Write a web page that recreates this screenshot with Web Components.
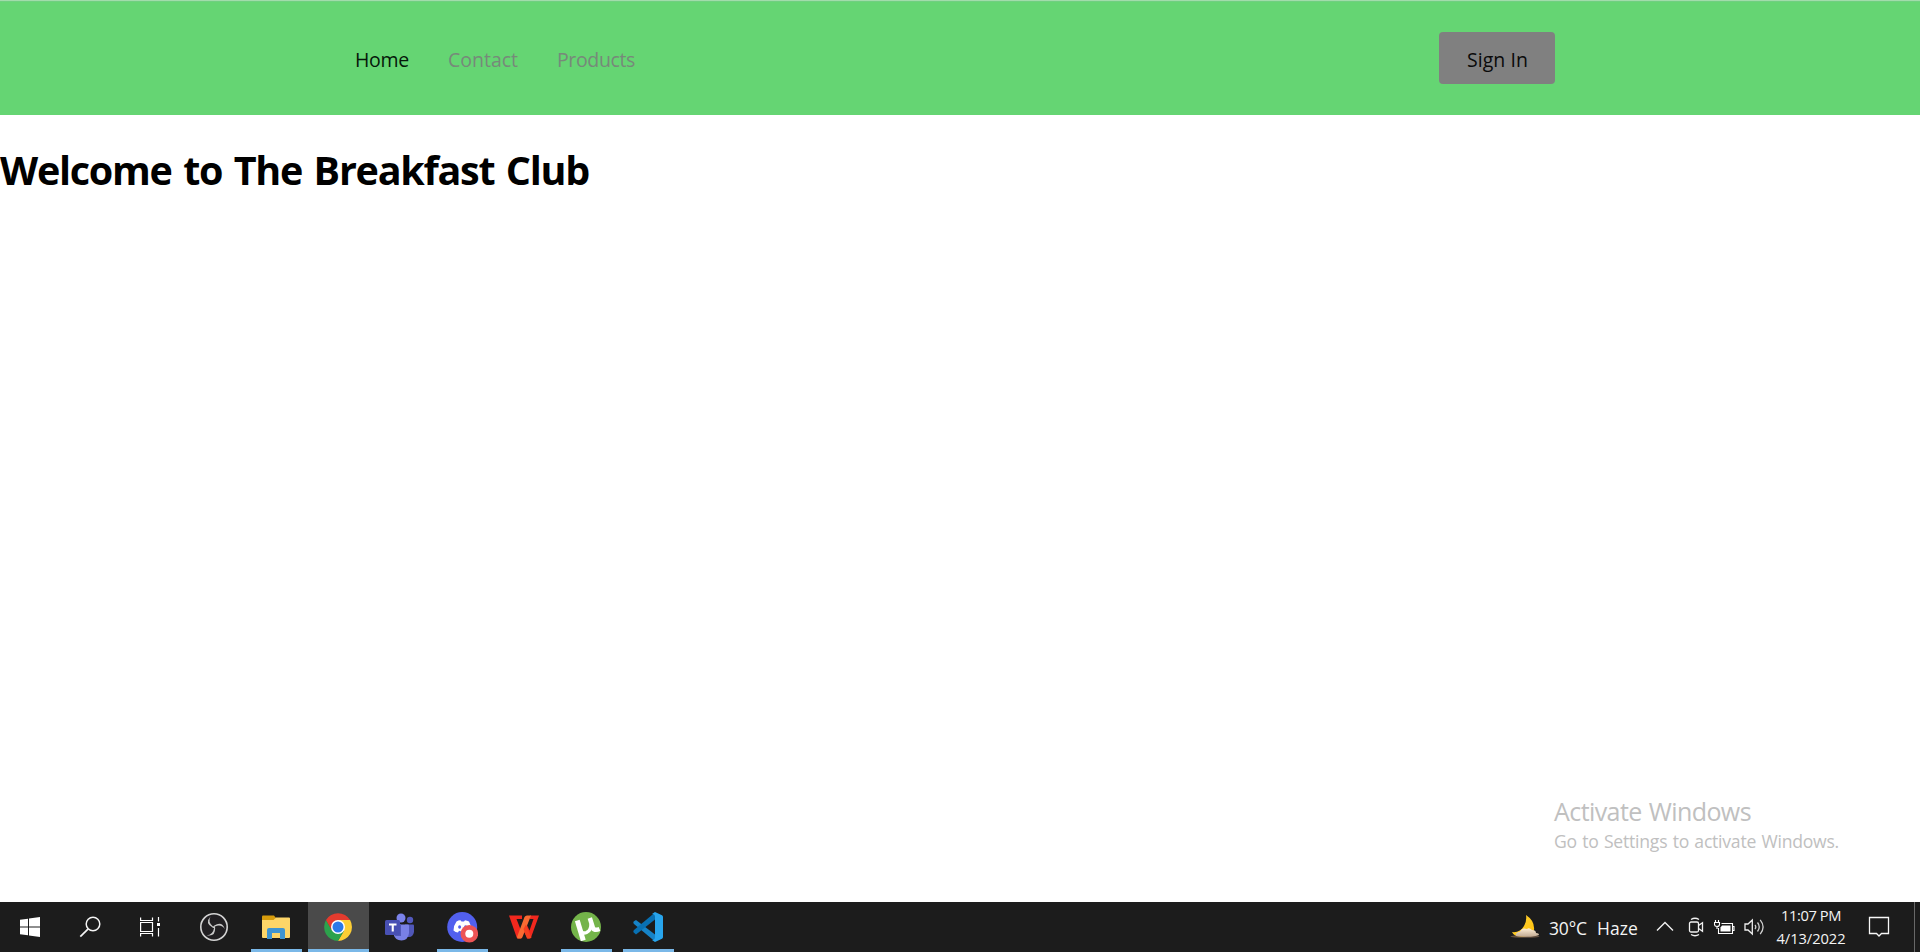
<!DOCTYPE html>
<html lang="en">
<head>
<meta charset="utf-8">
<title>The Breakfast Club</title>
<style>
html, body { margin: 0; height: 100%; overflow: hidden; background: #fff; font-family: "Open Sans", "Noto Sans", sans-serif; }
</style>
</head>
<body>
<desk-screen></desk-screen>
<script>
const define = (name, html, ready) => customElements.define(name, class extends HTMLElement {
  constructor() {
    super();
    this.attachShadow({ mode: "open" }).innerHTML = html;
  }
  connectedCallback() { if (ready) ready.call(this, this.shadowRoot); }
});

/* A one-line label whose letters are spaced to fill the width given */
define("fit-label", `<style>:host{display:block;white-space:pre;flex:none}span{display:inline-block}</style><span></span>`, function (root) {
  const span = root.querySelector("span");
  const text = this.getAttribute("text");
  const width = Number(this.getAttribute("width"));
  span.textContent = text;
  this.style.width = width + "px";
  const natural = span.getBoundingClientRect().width;
  span.style.letterSpacing = ((width - natural) / text.length) + "px";
});

define("nav-link", `<style>
:host{display:block;color:#77897a}
:host([active]){color:#06180a}
</style><slot></slot>`);

define("sign-button", `<style>
:host{display:flex;width:116px;height:52px;box-sizing:border-box;border-radius:4px;background:#808080;color:#0a0a0a;justify-content:center;padding:13px 0 0 1px}
</style><slot></slot>`);

define("site-nav", `<style>
:host{display:flex;box-sizing:border-box;height:115px;background:#65d573;border-top:1px solid #a2dcab;padding:31px 365px 0 355px;justify-content:space-between;font-size:19.5px;line-height:30px;box-shadow:inset 0 1px #6fcf80}
nav{display:flex;gap:39px;padding-top:13px}
</style>
<nav>
<nav-link active><fit-label text="Home" width="54"></fit-label></nav-link>
<nav-link><fit-label text="Contact" width="70"></fit-label></nav-link>
<nav-link><fit-label text="Products" width="78"></fit-label></nav-link>
</nav>
<sign-button><fit-label text="Sign In" width="61"></fit-label></sign-button>`);

define("page-title", `<style>
:host{display:block;padding-top:28px}
h1{margin:0;font-size:39.5px;line-height:54px;font-weight:700;color:#000;word-spacing:2.5px}
</style><h1><fit-label text="Welcome to The Breakfast Club" width="589"></fit-label></h1>`);

define("activation-note", `<style>
:host{display:flex;flex-direction:column;align-self:flex-end;margin:auto 80px 48px 0;width:286px;color:#c0c0c0}
.a{font-size:25px;line-height:34px;word-spacing:1px}.b{font-size:17.6px;line-height:26px;word-spacing:1px}
</style><fit-label class="a" text="Activate Windows" width="197"></fit-label>
<fit-label class="b" text="Go to Settings to activate Windows." width="285"></fit-label>`);

define("task-item", `<style>
:host{display:grid;grid-template-rows:47px 3px;width:62px;height:50px;justify-items:center;align-items:center;flex:none}
:host([small]){width:60px}
i{display:block;width:51px;height:3px}
:host([running]) i{background:#7ab8e8}
:host([current]){background:linear-gradient(90deg,#1c1c1c 1px,#4a4a4a 1px)}
:host([current]) i{width:61px;justify-self:end}
::slotted(svg){display:block;margin-top:3px}
</style><slot></slot><i></i>`);

define("system-tray", `<style>
:host{display:flex;height:50px;color:#f4f4f4}
svg{display:block;flex:none}
.w{font-size:17.5px;line-height:24px;padding-top:14px}
.clock{display:flex;flex-direction:column;align-items:center;width:72px;margin-left:10px;font-size:14.7px;line-height:23px;padding-top:1.500px}
.edge{width:1px;height:50px;background:#686868;margin:0 5px 0 24px}
</style>
<svg width="32" height="28" viewBox="0 0 32 28" style="margin-top:10px">
<defs><linearGradient id="m" x1="0" x2="1" y2="1"><stop stop-color="#ffd43a"/><stop offset="1" stop-color="#ffc009"/></linearGradient>
<linearGradient id="c" y2="1" x2="0"><stop stop-color="#fff0d8"/><stop offset="1" stop-color="#c0a890"/></linearGradient></defs>
<path d="M17 3Q26 9 25 18Q22 25 12 25Q5 24.500 3 20Q11 21 15 14Q18 9 17 3Z" fill="url(#m)"/>
<ellipse cx="16" cy="24.500" rx="14.500" ry="1.300" fill="#8b6d55" opacity=".65"/>
<path d="M7 24Q6 20.500 11 19.500Q13 15 18 17Q20 15 23 18Q27 18 27 21Q30 21 30 23Q23 26 7 24Z" fill="url(#c)"/></svg>
<fit-label class="w" text="30°C" width="38" style="margin-left:8px"></fit-label>
<fit-label class="w" text="Haze" width="41" style="margin-left:10px"></fit-label>
<svg width="18" height="12" viewBox="0 0 18 12" fill="none" stroke="#f2f2f2" stroke-width="1.400" style="margin:19px 0 0 18px"><path d="M1 9.500L9 1.500L17 9.500"/></svg>
<svg width="17" height="20" viewBox="0 0 17 20" fill="none" stroke="#f2f2f2" stroke-width="1.300" style="margin:15px 0 0 14px"><rect x="1.500" y="5" width="9" height="10" rx="1.500"/><path d="M10.500 8.500L14.500 5.800V14.200L10.500 11.500M3 2.500Q7 0 11 2.500M3 17.500Q7 20 11 17.500"/></svg>
<svg width="22" height="17" viewBox="0 0 22 17" style="margin:17px 0 0 9px"><path d="M7.500 4.500H18.500V14.500H4.500V9M18.500 7.500H20V11.500H18.500M1.500 1V4M4.500 1V4M.500 3.500H5.500V5.500Q5.500 7.500 3 7.500Q.500 7.500 .500 5.500ZM3 7.500V10" fill="none" stroke="#fff" stroke-width="1.100"/><path d="M8 6.500H16.500V12.500H6.500V8.500Z" fill="#fff"/></svg>
<svg width="21" height="20" viewBox="0 0 21 20" fill="none" stroke="#eee" stroke-width="1.300" style="margin:15px 0 0 8px"><path d="M1 7H4L8.300 3V17L4 13H1Z"/><path d="M11 8Q12.600 10 11 12M13.500 5.500Q17 10 13.500 14.500M16.200 2.800Q22 10 16.200 17.200" opacity=".85"/></svg>
<div class="clock"><fit-label text="11:07 PM" width="60"></fit-label><fit-label text="4/13/2022" width="69"></fit-label></div>
<svg width="22" height="22" viewBox="0 0 22 22" fill="none" stroke="#f7f7f7" stroke-width="1.300" style="margin:14px 0 0 21px"><path d="M1.500 1.500H20.500V17.500H13.500L11 20L8.500 17.500H1.500Z"/></svg>
<div class="edge"></div>`);

define("task-bar", `<style>
:host{display:flex;height:50px;background:#1c1c1c;justify-content:space-between}
.left{display:flex}
.first{margin-left:3px}
</style>
<div class="left">
<task-item small><svg width="20" height="20" viewBox="0 0 20 20" fill="#fff"><path d="M0 2.800L8 1.700V9.500H0ZM9 1.500L20 0V9.500H9ZM0 10.500H8V18.300L0 17.200ZM9 10.500H20V20L9 18.500Z"/></svg></task-item>
<task-item small><svg width="22" height="22" viewBox="0 0 22 22" fill="none" stroke="#f4f4f4" stroke-width="1.500"><circle cx="14" cy="8" r="6.800"/><path d="M9.200 12.800L1.300 20.700" stroke-width="1.700"/></svg></task-item>
<task-item small><svg width="20" height="20" viewBox="0 0 20 20" fill="none" stroke="#fff" stroke-width="1.200"><path d="M.600 .500V3.500H12.500V.500M.600 5.500H12.500V14.500H.600ZM.600 19.500V16.500H12.500V19.500M18.500 0V4.500M18.500 11V19.500"/><path d="M17 6h3v3h-3z" fill="#fff" stroke="none"/></svg></task-item>
<task-item class="first"><svg width="30" height="30" viewBox="0 0 30 30"><circle cx="15" cy="15" r="13.200" fill="#211f22" stroke="#d4d4d4" stroke-width="1.600"/><g fill="#c8c8c8"><path d="M11.500 4.500Q8.500 10 14 14.500L16 15.500Q15 16.500 13.500 15.500Q5.500 11 11.500 4.500Z"/><path d="M11.500 4.500Q8.500 10 14 14.500L16 15.500Q15 16.500 13.500 15.500Q5.500 11 11.500 4.500Z" transform="rotate(120 15 15)"/><path d="M11.500 4.500Q8.500 10 14 14.500L16 15.500Q15 16.500 13.500 15.500Q5.500 11 11.500 4.500Z" transform="rotate(240 15 15)"/></g></svg></task-item>
<task-item running><svg width="28" height="24" viewBox="0 0 28 24"><path d="M0 1.500Q0 .500 1 .500H12L14 3L12 6H0Z" fill="#d79c0c"/><path d="M0 5H11.500L14 2.500H27Q28 2.500 28 3.500V22Q28 23 27 23H1Q0 23 0 22Z" fill="#fdd568"/><path d="M5 24V15Q5 13 7 13H21Q23 13 23 15V24H18V18H10V24Z" fill="#3f94d0"/></svg></task-item>
<task-item running current><svg width="30" height="30" viewBox="0 0 30 30"><path d="M15 8H27.100A14 14 0 0 1 15 29L21.100 18.500Z" fill="#fdce35"/><path d="M3 8A14 14 0 0 0 15 29L21.100 18.500L9 18.500Z" fill="#2ca24c"/><path d="M15 8H27.100A14 14 0 0 0 3 8L9 18.500Z" fill="#e33b2e"/><circle cx="15" cy="15" r="7" fill="#fff"/><circle cx="15" cy="15" r="5.500" fill="#2b79e8"/></svg></task-item>
<task-item><svg width="30" height="28" viewBox="0 0 30 28"><circle cx="25" cy="7" r="3.200" fill="#5359bd"/><path d="M20 11.500H28Q29 11.500 29 12.500V19Q28 24 24 24H20Z" fill="#5057b8"/><circle cx="16" cy="5" r="4.500" fill="#7b83eb"/><path d="M8 11.500H23Q24 11.500 24 12.500V20Q23 27.500 16.500 27.500Q10 27.500 8.500 21Z" fill="#7981e6"/><path d="M12 11H16V23H10Z" fill="#5159b8"/><rect y="7" width="15" height="15" rx="1.500" fill="#4850b3"/><path d="M4 10.500H11.500V12.500H8.800V18.500H6.700V12.500H4Z" fill="#fff"/></svg></task-item>
<task-item running><svg width="31" height="32" viewBox="0 0 31 32"><circle cx="15.200" cy="16" r="15" fill="#5260ee"/><path d="M9.500 10.500Q12 9 13.500 9.300L14.500 10.500H17L18 9.300Q20 9.500 22 10.500Q24.500 15 24.500 19.500Q22.500 21.500 20.500 21.500L19.500 19.800Q15.500 21 12 19.800L11 21.500Q8.500 21.300 6.500 19.500Q6.500 14.500 9.500 10.500Z" fill="#fff"/><ellipse cx="12.600" cy="16" rx="1.500" ry="1.800" fill="#5260ee"/><ellipse cx="18.600" cy="16" rx="1.500" ry="1.800" fill="#5260ee"/><circle cx="22.300" cy="22.800" r="8.800" fill="#ed5456"/><circle cx="22.300" cy="22.800" r="4" fill="#fff"/></svg></task-item>
<task-item><svg width="30" height="24" viewBox="0 0 30 24"><path d="M0 .500H13V4H7.500L11 13L12 23.500H9Q8 23.500 7.500 22Z" fill="#f2281e"/><path d="M17.500 9L20.500 15.500L24.500 4H21V.500H30L22 22.500Q21.500 23.500 20.500 23.500H18.500L14.500 16Z" fill="#f2281e"/><path d="M15.500 2Q16.300 .500 18 .500H22L13.500 22Q13 23.500 11.500 23.500H8.500L8 22Z" fill="#fb6a32"/><path d="M14.500 14L17 9.500L22.500 22.500Q21.500 23.500 20 23.500H18Z" fill="#f5401f"/></svg></task-item>
<task-item running><svg width="30" height="30" viewBox="0 0 30 30"><circle cx="15" cy="15" r="15" fill="#74b44a"/><g fill="none" stroke="#fff"><path d="M6.300 8.500L12.300 28.500" stroke-width="5"/><path d="M9 17.500Q11 22.500 15.500 20.500Q20.500 18 20 12" stroke-width="3.500"/><path d="M18.800 6L21.800 15.500Q23 19.300 28.500 17" stroke-width="4.500"/></g></svg></task-item>
<task-item running><svg width="30" height="30" viewBox="0 0 30 30"><path d="M3 8L22 22.500V29.500L1 12Q-.300 10.500 1 9.300Z" fill="#1683c7"/><path d="M3 22.500L22 7.500V.500L1 18Q-.300 19.500 1 20.700Z" fill="#0870b3"/><path d="M22 0L29 3.300Q30 4 30 5V25Q30 26 29 26.700L22 30L19 28Q22 28 22 25V5Q22 2 19 2Z" fill="#28a5ed"/></svg></task-item>
</div>
<system-tray></system-tray>`);

define("desk-screen", `<style>:host{display:flex;flex-direction:column;width:1920px;height:952px;background:#fff}</style>
<site-nav></site-nav><page-title></page-title><activation-note></activation-note><task-bar></task-bar>`);
</script>
</body>
</html>
